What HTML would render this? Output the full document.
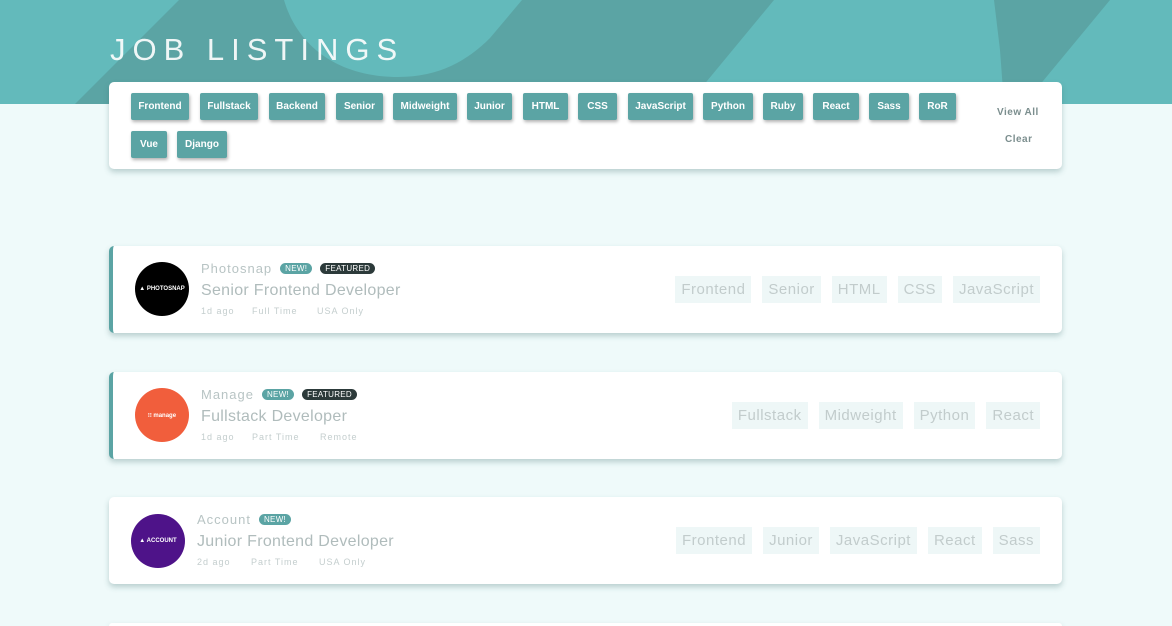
<!DOCTYPE html>
<html><head><style>
*{margin:0;padding:0;box-sizing:border-box}
html,body{width:1172px;height:626px;overflow:hidden}
body{background:#effafa;position:relative;font-family:"Liberation Sans",sans-serif}
.hdr{position:absolute;left:0;top:0;width:1172px;height:104px}
h1{position:absolute;left:110px;top:32px;color:rgba(255,255,255,.9);font-weight:normal;font-size:31px;letter-spacing:7px;font-family:"Liberation Sans",sans-serif}
.card{position:absolute;left:109px;width:953px;background:#fff;border-radius:5px;box-shadow:0 3px 6px rgba(60,110,110,.3)}
.ft{position:absolute;height:27px;background:#5ba4a4;color:#fff;font-weight:bold;font-size:10px;line-height:27px;text-align:center;border-radius:2px;box-shadow:1px 2px 3px rgba(0,0,0,.3)}
.va{position:absolute;color:#7b8e8e;font-weight:bold;font-size:10px;letter-spacing:.5px}
.job{height:87px}
.bl{border-left:4px solid #5ba4a4}
.logo{position:absolute;width:54px;height:54px;border-radius:50%;color:#fff;font-size:6px;font-weight:bold;display:flex;align-items:center;justify-content:center}
.co{position:absolute;color:#b8c4c4;font-size:13px;letter-spacing:1px}
.ti{position:absolute;color:#b0bcbc;font-size:16px;letter-spacing:.3px;white-space:nowrap}
.me{position:absolute;color:#c4cece;font-size:9px;letter-spacing:1px;white-space:nowrap}
.me span{position:absolute;top:0}
.b{display:inline-block;font-size:8px;color:#fff;border-radius:8px;padding:1px 5px;margin-left:8px;vertical-align:2px;letter-spacing:.3px}
.tags{position:absolute;right:22px;top:30px;display:flex;gap:11px}
.tags span{background:#eef7f7;color:#c2cccc;font-size:15px;height:27px;line-height:27px;padding:0 6px;letter-spacing:.5px}
</style></head><body>
<svg class="hdr" width="1172" height="104" viewBox="0 0 1172 104">
<rect width="1172" height="104" fill="#5ba4a4"/>
<g fill="#63babb">
<polygon points="0,0 179,0 75,104 0,104"/>
<path d="M284,0 C298,48 340,77 398,77 C440,77 468,60 490,38 L522,0 Z"/>
<polygon points="774,0 994,0 1000,50 1004,104 688,104"/>
<polygon points="1110,0 1172,0 1172,104 1024,104"/>
</g>
</svg>
<h1>JOB LISTINGS</h1>
<div class="card" style="top:82px;height:87px;left:109px"></div>
<div class="ft" style="left:131px;top:93px;width:58px">Frontend</div>
<div class="ft" style="left:200px;top:93px;width:58px">Fullstack</div>
<div class="ft" style="left:269px;top:93px;width:56px">Backend</div>
<div class="ft" style="left:336px;top:93px;width:47px">Senior</div>
<div class="ft" style="left:393px;top:93px;width:64px">Midweight</div>
<div class="ft" style="left:467px;top:93px;width:45px">Junior</div>
<div class="ft" style="left:523px;top:93px;width:45px">HTML</div>
<div class="ft" style="left:578px;top:93px;width:39px">CSS</div>
<div class="ft" style="left:628px;top:93px;width:65px">JavaScript</div>
<div class="ft" style="left:703px;top:93px;width:50px">Python</div>
<div class="ft" style="left:763px;top:93px;width:40px">Ruby</div>
<div class="ft" style="left:813px;top:93px;width:46px">React</div>
<div class="ft" style="left:869px;top:93px;width:40px">Sass</div>
<div class="ft" style="left:919px;top:93px;width:37px">RoR</div>
<div class="ft" style="left:131px;top:131px;width:36px">Vue</div>
<div class="ft" style="left:177px;top:131px;width:50px">Django</div>
<div class="va" style="left:997px;top:107px">View All</div>
<div class="va" style="left:1005px;top:134px">Clear</div>

<div class="card job bl" style="top:246px">
<div class="logo" style="left:22px;top:16px;background:#000">▲ PHOTOSNAP</div>
<div class="co" style="left:88px;top:15px">Photosnap<span class="b" style="background:#5ba4a4">NEW!</span><span class="b" style="background:#2c3a3a">FEATURED</span></div>
<div class="ti" style="left:88px;top:36px">Senior Frontend Developer</div>
<div class="me" style="left:88px;top:60px"><span style="left:0">1d ago</span><span style="left:51px">Full Time</span><span style="left:116px">USA Only</span></div>
<div class="tags"><span>Frontend</span><span>Senior</span><span>HTML</span><span>CSS</span><span>JavaScript</span></div>
</div>

<div class="card job bl" style="top:372px">
<div class="logo" style="left:22px;top:16px;background:#f15e3c">⁝⁝ manage</div>
<div class="co" style="left:88px;top:15px">Manage<span class="b" style="background:#5ba4a4">NEW!</span><span class="b" style="background:#2c3a3a">FEATURED</span></div>
<div class="ti" style="left:88px;top:36px">Fullstack Developer</div>
<div class="me" style="left:88px;top:60px"><span style="left:0">1d ago</span><span style="left:51px">Part Time</span><span style="left:119px">Remote</span></div>
<div class="tags"><span>Fullstack</span><span>Midweight</span><span>Python</span><span>React</span></div>
</div>

<div class="card job" style="top:497px">
<div class="logo" style="left:22px;top:17px;background:#4e1389">▲ ACCOUNT</div>
<div class="co" style="left:88px;top:15px">Account<span class="b" style="background:#5ba4a4">NEW!</span></div>
<div class="ti" style="left:88px;top:36px">Junior Frontend Developer</div>
<div class="me" style="left:88px;top:60px"><span style="left:0">2d ago</span><span style="left:54px">Part Time</span><span style="left:122px">USA Only</span></div>
<div class="tags"><span>Frontend</span><span>Junior</span><span>JavaScript</span><span>React</span><span>Sass</span></div>
</div>

<div class="card" style="top:623px;height:3px;border-radius:5px 5px 0 0"></div>
</body></html>
